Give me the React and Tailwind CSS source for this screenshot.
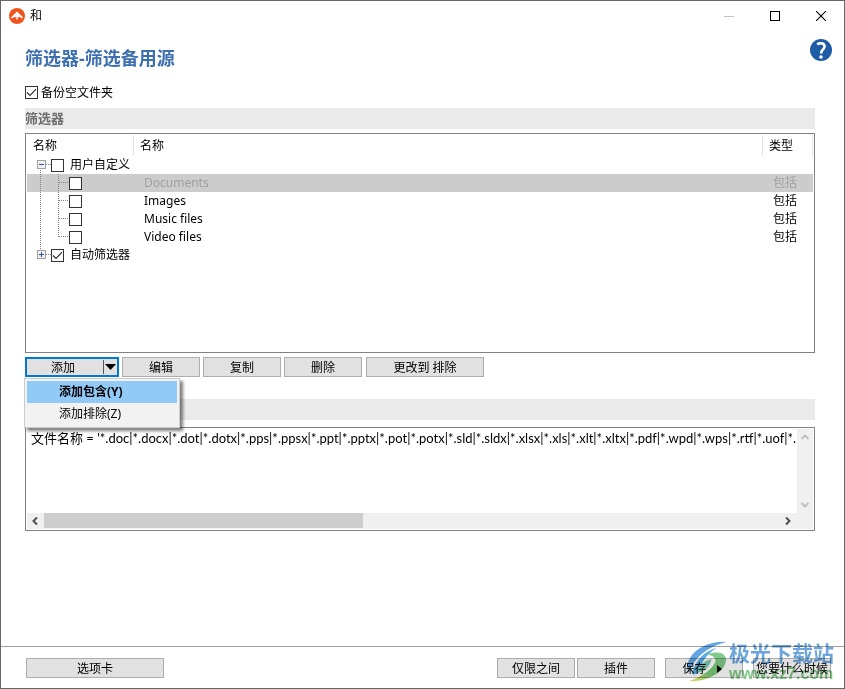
import { useState } from 'react'

const FILE_MASK =
  "文件名称 = '*.doc|*.docx|*.dot|*.dotx|*.pps|*.ppsx|*.ppt|*.pptx|*.pot|*.potx|*.sld|*.sldx|*.xlsx|*.xls|*.xlt|*.xltx|*.pdf|*.wpd|*.wps|*.rtf|*.uof|*.uot|*.odt|*.ods|*.odp'"

const FILTERS = [
  { name: 'Documents', type: '包括' },
  { name: 'Images', type: '包括' },
  { name: 'Music files', type: '包括' },
  { name: 'Video files', type: '包括' },
]

function CheckBox({ className = '', ...props }) {
  return (
    <span className={`grid size-[13px] shrink-0 ${className}`}>
      <input type="checkbox" className="peer col-start-1 row-start-1 size-[13px] appearance-none border border-[#333] bg-white" {...props} />
      <svg viewBox="0 0 13 13" className="pointer-events-none invisible col-start-1 row-start-1 size-[13px] peer-checked:visible" fill="none" stroke="#333" strokeWidth="1.2">
        <path d="M2 6.5 5 9.5 11 3.2" />
      </svg>
    </span>
  )
}

function Toggle({ open }) {
  return (
    <svg width="24" height="18" viewBox="0 0 24 18" className="shrink-0" fill="none" shapeRendering="crispEdges">
      {open ? (
        <path d="M13.5 14v4" stroke="#808080" strokeDasharray="1 1" />
      ) : (
        <path d="M13.5 0v5" stroke="#808080" strokeDasharray="1 1" />
      )}
      <path d="M19 8.5h5" stroke="#808080" strokeDasharray="1 1" />
      <rect x="10.5" y="4.5" width="8" height="8" fill="#f0f0f0" stroke="#a0a0a0" />
      <path d={open ? 'M12 8.5h5' : 'M12 8.5h5M14.5 6v5'} stroke="#2f4f9f" />
    </svg>
  )
}

function Branch({ last }) {
  return (
    <svg width="42" height="18" viewBox="0 0 42 18" className="shrink-0" fill="none" stroke="#808080" strokeDasharray="1 1" shapeRendering="crispEdges">
      <path d="M13.5 0v18" />
      <path d={last ? 'M31.5 0v9' : 'M31.5 0v18'} />
      <path d="M32 8.5h10" />
    </svg>
  )
}

function Button({ className = '', children, ...props }) {
  return (
    <button type="button" className={`h-5 border border-[#adadad] bg-[#e1e1e1] pt-px text-center leading-[18px] whitespace-nowrap ${className}`} {...props}>
      {children}
    </button>
  )
}

function Chevron({ d, color }) {
  return (
    <svg width="16" height="16" viewBox="0 0 16 16" fill="none" stroke={color} strokeWidth="2">
      <path d={d} />
    </svg>
  )
}

function TitleBar() {
  return (
    <header className="flex h-[29px] items-center pl-2">
      <svg width="16" height="16" viewBox="0 0 16 16">
        <circle cx="8" cy="8" r="8" fill="#f0541e" />
        <path d="M8 3.6 14 9.2 12.8 10.4 10.6 8.8 9.6 9.6 8.7 8.8V11.4H7.3V8.8L6.4 9.6 5.4 8.8 3.2 10.4 2 9.2Z" fill="#fff" />
      </svg>
      <span className="ml-[5px] flex-1">和</span>
      <button type="button" aria-label="最小化" className="grid h-full w-[46px] place-items-center">
        <svg width="10" height="10" shapeRendering="crispEdges"><path d="M0 5.5h10" stroke="#c4c4c4" /></svg>
      </button>
      <button type="button" aria-label="最大化" className="grid h-full w-[46px] place-items-center">
        <svg width="10" height="10" shapeRendering="crispEdges"><path d="M.5.5h9v9h-9z" stroke="#000" fill="none" /></svg>
      </button>
      <button type="button" aria-label="关闭" className="grid h-full w-[46px] place-items-center">
        <svg width="10" height="10"><path d="M0 0 10 10M10 0 0 10" stroke="#000" strokeWidth="1.1" /></svg>
      </button>
    </header>
  )
}

function FilterTree() {
  const [selected, setSelected] = useState('Documents')

  return (
    <div className="h-[220px] border border-[#828282] p-px">
      <table className="w-full table-fixed border-separate border-spacing-0">
        <colgroup>
          <col className="w-[107px]" />
          <col />
          <col className="w-[50px]" />
        </colgroup>
        <thead>
          <tr className="h-[21px] text-left">
            <th className="border-r border-[#e5e5e5] p-0 pl-[6px] font-normal">名称</th>
            <th className="border-r border-[#e5e5e5] p-0 pl-[6px] font-normal">名称</th>
            <th className="border-r border-[#e5e5e5] p-0 pl-[6px] font-normal">类型</th>
          </tr>
        </thead>
        <tbody>
          <tr className="h-[18px]">
            <td colSpan={3} className="p-0">
              <label className="flex h-[18px] items-center">
                <Toggle open />
                <CheckBox />
                <span className="ml-[6px]">用户自定义</span>
              </label>
            </td>
          </tr>
          {FILTERS.map((f, i) => (
            <tr
              key={f.name}
              onClick={() => setSelected(f.name)}
              className={`h-[18px] ${selected === f.name ? 'bg-[#cccccc] text-[#a0a0a0]' : ''}`}
            >
              <td className="p-0">
                <div className="flex h-[18px] items-center">
                  <Branch last={i === FILTERS.length - 1} />
                  <CheckBox aria-label={f.name} />
                </div>
              </td>
              <td className="p-0 pl-[10px]">{f.name}</td>
              <td className="p-0 pl-[10px]">{f.type}</td>
            </tr>
          ))}
          <tr className="h-[18px]">
            <td colSpan={3} className="p-0">
              <label className="flex h-[18px] items-center">
                <Toggle />
                <CheckBox defaultChecked />
                <span className="ml-[6px]">自动筛选器</span>
              </label>
            </td>
          </tr>
        </tbody>
      </table>
    </div>
  )
}

function AddMenu() {
  return (
    <div role="menu" className="absolute top-[21px] -left-px z-10 w-[156px] border border-[#ccc] bg-[#f2f2f2] p-[2px] shadow-[3px_3px_3px_rgba(0,0,0,0.5)]">
      <button type="button" role="menuitem" className="block h-[22px] w-full bg-[#91c9f7] pl-8 text-left font-bold">添加包含(Y)</button>
      <button type="button" role="menuitem" className="block h-[22px] w-full pl-8 text-left">添加排除(Z)</button>
    </div>
  )
}

function Watermark() {
  return (
    <div className="pointer-events-none absolute right-[10px] bottom-[5px] flex items-center gap-[2px] opacity-75 mix-blend-multiply">
      <svg width="42" height="42" viewBox="0 0 44 44">
        <defs>
          <linearGradient id="tail" x1="0" y1="1" x2="1" y2="0">
            <stop offset="0" stopColor="#d8c020" />
            <stop offset="0.4" stopColor="#4fb848" />
            <stop offset="1" stopColor="#58b86a" />
          </linearGradient>
        </defs>
        <path d="M43 1C27 0 12 7 5 18c-3 6-4 11-1 15C9 19 22 6 43 1Z" fill="#2f86d6" />
        <path d="M7 34C11 21 19 11 33 7 23 14 17 21 16 31c-3 4-7 5-9 3Z" fill="#2490dc" />
        <path d="M23 14c11-4 20-2 20 6C42 33 23 43 4 42c13-4 26-13 28-21 0-4-4-6-9-7Z" fill="url(#tail)" />
        <path d="M13 33c2-8 7-13 15-14-2 7-8 14-15 14Z" fill="#50b890" />
      </svg>
      <div className="leading-none">
        <div className="text-[21px] leading-6 font-bold text-[#3b87cf]">极光下载站</div>
        <div className="font-['Liberation_Sans'] text-[16px] leading-[18px] font-bold text-[#55b35c]">www.xz7.com</div>
      </div>
    </div>
  )
}

export default function App() {
  const [menuOpen, setMenuOpen] = useState(true)

  return (
    <div className="relative flex min-h-screen flex-col border border-[#666] bg-white font-['Noto_Sans','Noto_Sans_CJK_SC',sans-serif] text-[12px] leading-[18px] text-black">
      <TitleBar />
      <main className="flex-1 pr-[29px] pl-6">
        <div className="relative flex h-14 items-center">
          <h1 className="text-[18px] leading-7 font-bold text-[#3d6fb0]">筛选器-筛选备用源</h1>
          <button type="button" aria-label="帮助" className="absolute top-[9px] -right-[17px]">
            <svg width="22" height="22" viewBox="0 0 22 22" fill="none">
              <circle cx="11" cy="11" r="11" fill="#1f5ca6" />
              <path d="M7.2 5.4C9.6 3.6 14.4 3.8 14.6 7.4c.1 2.8-3.500 3.400-3.500 7" stroke="#fff" strokeWidth="2.6" />
              <circle cx="11" cy="18" r="1.8" fill="#fff" />
            </svg>
          </button>
        </div>
        <label className="flex h-[22px] w-fit items-start">
          <CheckBox defaultChecked />
          <span className="ml-[3px] leading-[13px]">备份空文件夹</span>
        </label>
        <h2 className="mb-1 h-[21px] bg-[#eaeaea] text-[13px] leading-[21px] font-bold text-[#6d6d6d]">筛选器</h2>
        <FilterTree />

        <div className="relative mt-1 flex gap-[3px]">
          <div className="flex h-5 w-[94px] border-2 border-[#0078d7] bg-[#e1e1e1]">
            <button type="button" className="flex-1 pt-px pr-1 leading-[16px]">添加</button>
            <button type="button" aria-label="更多添加选项" aria-expanded={menuOpen} onClick={() => setMenuOpen(!menuOpen)} className="my-px grid w-[14px] place-items-center border-l border-[#555]">
              <svg width="11" height="6"><path d="M0 0h11L5.5 6Z" /></svg>
            </button>
          </div>
          <Button className="w-[78px]">编辑</Button>
          <Button className="w-[78px]">复制</Button>
          <Button className="w-[78px]">删除</Button>
          <Button className="ml-px w-[118px]">更改到 排除</Button>
          {menuOpen && <AddMenu />}
        </div>

        <div className="mt-[22px] mb-[7px] h-[21px] bg-[#eaeaea]" />

        <div className="flex h-[104px] flex-col border border-[#828282] p-px">
          <div className="flex min-h-0 flex-1">
            <textarea readOnly aria-label="筛选条件" wrap="off" value={FILE_MASK} className="min-w-0 flex-1 resize-none overflow-hidden pl-1 font-['Lato','Noto_Sans_CJK_SC',sans-serif] text-[13px] leading-[18px] outline-none" />
            <div className="flex w-[16px] flex-col justify-between bg-[#f0f0f0]">
              <button type="button" aria-label="向上"><Chevron d="M4.5 10 8 6.5 11.5 10" color="#bfbfbf" /></button>
              <button type="button" aria-label="向下"><Chevron d="M4.5 6 8 9.5 11.5 6" color="#bfbfbf" /></button>
            </div>
          </div>
          <div className="flex h-[16px] bg-[#f0f0f0]">
            <button type="button" aria-label="向左" className="w-[17px]"><Chevron d="M10 4.5 6.5 8 10 11.5" color="#505050" /></button>
            <div className="flex-1">
              <div className="h-[15px] w-[43.4%] bg-[#cdcdcd]" />
            </div>
            <button type="button" aria-label="向右" className="mr-4 w-[17px]"><Chevron d="M6 4.5 9.5 8 6 11.5" color="#505050" /></button>
          </div>
        </div>
      </main>

      <footer className="flex h-[42px] items-start border-t border-[#a0a0a0] pt-[11px] pr-[13px] pl-[25px]">
        <Button className="mr-auto w-[138px]">选项卡</Button>
        <Button className="w-[78px]">仅限之间</Button>
        <Button className="ml-[2px] w-[78px]">插件</Button>
        <Button className="ml-[10px] flex w-[78px] items-center justify-center pr-1">
          保存
          <svg width="5" height="8" className="ml-[10px]"><path d="M0 0v8L5 4Z" /></svg>
        </Button>
        <Button className="ml-[10px] w-[78px]">您要什么时候</Button>
      </footer>
      <Watermark />
    </div>
  )
}
